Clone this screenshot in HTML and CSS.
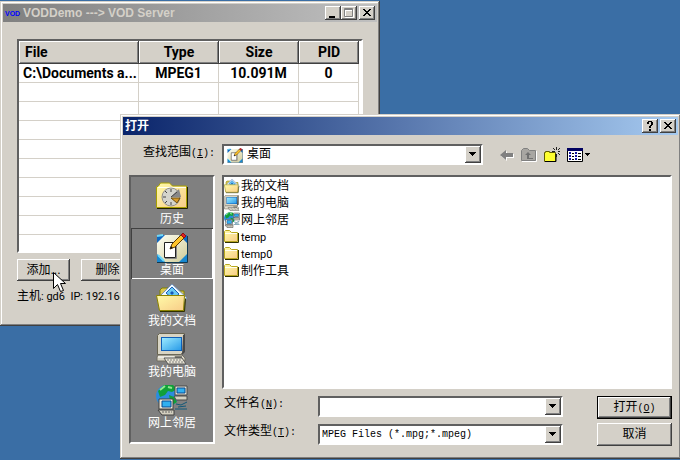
FILE: index.html
```html
<!DOCTYPE html>
<html lang="zh-CN">
  <head>
    <meta charset="UTF-8" />
    <meta name="viewport" content="width=device-width, initial-scale=1.0" />
    <title>VODDemo</title>
    <link rel="stylesheet" href="styles.css">
  </head>
  <body>
    <!-- shared icons -->
    <svg class="sprite" aria-hidden="true">
      <defs>
        <linearGradient id="screen" x1="0" y1="0" x2="1" y2="1">
          <stop offset="0" stop-color="#9ceaff" />
          <stop offset="1" stop-color="#2a9ce8" />
        </linearGradient>
        <linearGradient id="paper" x1="0" y1="0" x2="1" y2="1">
          <stop offset="0" stop-color="#fffba8" />
          <stop offset="1" stop-color="#f8cc88" />
        </linearGradient>
        <linearGradient id="desk" x1="0" y1="0" x2="1" y2="1">
          <stop offset="0" stop-color="#fffff4" />
          <stop offset="1" stop-color="#d0cc98" />
        </linearGradient>
      </defs>
      <symbol id="icon-history" viewBox="0 0 32 32">
        <path d="M.5 27.500V7l2-1 2-3h9l3 3h14v21.500z" fill="url(#paper)" stroke="#a8a000" />
        <path d="M1 28.500h30.500V7" fill="none" stroke="#202000" />
        <path d="M2 7.500h28" stroke="#fffff0" />
        <circle cx="15" cy="17" r="9" fill="#d4d4cc" stroke="#909090" />
        <path d="M15 17l8-8 2 8z" fill="#888" />
        <path d="M15 18h9l-3 5z" fill="#d89a28" stroke="#705010" />
        <path d="M15 9v3M7 17h3M9 11l2 2M9 23l2-2M15 25v-3M15 17l6-5" stroke="#444" />
      </symbol>
      <symbol id="icon-desktop" viewBox="0 0 32 32">
        <path d="M1 4h30v27H1z" fill="url(#desk)" />
        <path d="M1 4h8l-8 8zM31 12V4h-8z" fill="#1068c0" />
        <path d="M1 31v-8l8 8zM31 23v8h-8z" fill="#1888d0" />
        <path d="M1 5l6-1M2 24l6 6" stroke="#70d8f8" stroke-width="2" />
        <path d="M1 31.500h30.500V5" fill="none" stroke="#103850" />
        <path d="M8.500 11.500h11v15h-11z" fill="#fff" stroke="#222" />
        <path d="M9 27.500h11.500V14" fill="none" stroke="#888" />
        <path d="M14 18l2-5L25 4l3 3-9 9z" fill="#ffc428" stroke="#5c3800" />
        <path d="M25 4l2-2 3 3-2 2z" fill="#e02020" stroke="#901010" />
        <path d="M14 18l1-3 2 2z" fill="#111" />
      </symbol>
      <symbol id="icon-documents" viewBox="0 0 32 32">
        <path d="M4 28V8l2-2h6l2 3h14v19z" fill="#dcc850" stroke="#808000" />
        <path d="M4 14L16 2l15 14-4 5H9z" fill="#eefaff" stroke="#7890b8" />
        <path d="M10 11l6-6 7 7-6 5z" fill="#68c8f4" stroke="#2060b8" />
        <path d="M14 11l2-2 2 2-2 2z" fill="#1858b8" />
        <path d="M.5 13.500h28l-1 15H3.500z" fill="url(#paper)" stroke="#8c8400" />
        <path d="M4 29.500h24.500l1-13" fill="none" stroke="#303000" />
      </symbol>
      <symbol id="icon-computer" viewBox="0 0 32 32">
        <path d="M1.500 2.500l2-2h25v18l-4 3h-23z" fill="#d8d4c4" stroke="#686450" />
        <path d="M27 2l2-1v18l-3 3z" fill="#484848" />
        <path d="M5 4h21v14H5z" fill="#1060b8" />
        <path d="M6 5h19v12H6z" fill="url(#screen)" />
        <path d="M2 22h24l3 3v3H1v-4z" fill="#d8d4c4" stroke="#706c60" />
        <path d="M2 24h16" stroke="#fff" />
        <path d="M8 25h18l4 6H12z" fill="#e8e4d4" stroke="#585858" />
        <path d="M11 27h15M13 29h15" stroke="#808080" stroke-dasharray="2 1" />
        <path d="M19 24h7" stroke="#303030" />
      </symbol>
      <symbol id="icon-network" viewBox="0 0 32 32">
        <circle cx="11" cy="12" r="11" fill="#2c8cdc" />
        <path d="M2 7l6-6h9l4 4-5 3-4-1-3 4-5 2zM13 11l5 2 3 5-6 4z" fill="#10a038" />
        <path d="M4 6l5-4M12 3l4 1" stroke="#90e890" stroke-width="2" />
        <path d="M19 2h12v9H19z" fill="#e8e4d4" stroke="#484848" />
        <path d="M21 4h8v5h-8z" fill="#30b0f0" stroke="#084890" />
        <path d="M18 12h13v4H20z" fill="#d4d0c0" stroke="#484848" />
        <path d="M3 15h14v10H3z" fill="#f0ecdc" stroke="#404040" />
        <path d="M6 17h9v6H6z" fill="#30b0f0" stroke="#084890" />
        <path d="M2 26h16v5H6z" fill="#d4d0c0" stroke="#404040" />
        <path d="M6 28h10" stroke="#666" stroke-dasharray="2 1" />
        <path d="M19 25h12M20 20l5 1 6-3M22 23l8-1" fill="none" stroke="#125878" />
      </symbol>
      <symbol id="icon-folder" viewBox="0 0 16 16">
        <path d="M.5 12.500v-10l1-1h4l2 2h6v9z" fill="url(#paper)" stroke="#b8a820" />
        <path d="M1 13.500h13.500V4" fill="none" stroke="#303000" />
        <path d="M1 4.500h12" stroke="#fffff0" />
      </symbol>
      <symbol id="icon-arrow" viewBox="0 0 12 12">
        <path d="M2 4h7v1H8v1H7v1H6v1H5V7H4V6H3V5H2z" />
      </symbol>
    </svg>

    <main class="desktop">
      <section class="window server">
        <header class="titlebar inactive">
          <span class="logo">VOD</span>
          <h1 class="title">VODDemo ---&gt; VOD Server</h1>
          <button class="caption-btn" aria-label="Minimize">
            <svg viewBox="0 0 12 10"><path d="M2 8h6v2H2z" /></svg>
          </button>
          <button class="caption-btn" aria-label="Maximize" disabled>
            <svg viewBox="0 0 12 10"><path d="M2.500 1.500h8v8h-8zM2 2.500h9" fill="none" stroke="#fff" /><path d="M1.500 .5h8v8h-8zM1 1.500h9" fill="none" stroke="#808080" /></svg>
          </button>
          <button class="caption-btn close" aria-label="Close">
            <svg viewBox="0 0 12 10"><path d="M2 1h2v1h1v1h2V2h1V1h2v1H9v1H8v1H7v1h1v1h1v1h1v1H8V7H7V6H5v1H4v1H2V7h1V6h1V5h1V4H4V3H3V2H2z" /></svg>
          </button>
        </header>
        <div class="server-body">
          <div class="grid-view sunken">
            <table class="files">
              <thead>
                <tr>
                  <th class="col-file">File</th>
                  <th class="col-type">Type</th>
                  <th class="col-type">Size</th>
                  <th class="col-pid">PID</th>
                </tr>
              </thead>
              <tbody>
                <tr><td>C:\Documents a...</td><td>MPEG1</td><td>10.091M</td><td>0</td></tr>
                <tr><td></td><td></td><td></td><td></td></tr>
                <tr><td></td><td></td><td></td><td></td></tr>
                <tr><td></td><td></td><td></td><td></td></tr>
                <tr><td></td><td></td><td></td><td></td></tr>
                <tr><td></td><td></td><td></td><td></td></tr>
                <tr><td></td><td></td><td></td><td></td></tr>
                <tr><td></td><td></td><td></td><td></td></tr>
                <tr><td></td><td></td><td></td><td></td></tr>
              </tbody>
            </table>
          </div>
          <div class="actions">
            <button class="btn">添加...</button>
            <button class="btn">删除</button>
          </div>
          <p class="status">主机<span class="latin">: gd6  IP: 192.168</span></p>
        </div>
      </section>

      <section class="window dialog" role="dialog" aria-labelledby="dialog-title">
        <header class="titlebar">
          <h2 class="title" id="dialog-title">打开</h2>
          <button class="caption-btn" aria-label="Help">
            <svg viewBox="0 0 12 10"><path d="M3 1h1V0h4v1h1v3H8v1H7v2H5V5h1V4h1V1H5v2H3zM5 8h2v2H5z" /></svg>
          </button>
          <button class="caption-btn close" aria-label="Close">
            <svg viewBox="0 0 12 10"><path d="M2 1h2v1h1v1h2V2h1V1h2v1H9v1H8v1H7v1h1v1h1v1h1v1H8V7H7V6H5v1H4v1H2V7h1V6h1V5h1V4H4V3H3V2H2z" /></svg>
          </button>
        </header>
        <div class="dialog-body">
          <div class="look-in">
            <label class="look-label" for="folder">查找范围<span class="mono">(<u>I</u>):</span></label>
            <div class="combo folder-combo sunken">
              <svg class="combo-icon"><use href="#icon-desktop" /></svg>
              <select id="folder"><option>桌面</option></select>
              <span class="drop"><svg><use href="#icon-arrow" /></svg></span>
            </div>
            <div class="tools">
              <button class="tool" aria-label="Back">
                <svg viewBox="0 0 16 16"><path d="M3 9l6-5v3h7v4H9v3z" fill="#fff" /><path d="M2 8l6-5v3h7v4H8v3z" fill="#808080" /></svg>
              </button>
              <button class="tool" aria-label="Up one level">
                <svg viewBox="0 0 16 16"><path d="M1 14.500h14.500V4" fill="none" stroke="#fff" /><path d="M.5 13.500v-10l2-2h4l2 2h6v10z" fill="#a8a6a2" stroke="#808080" /><path d="M4 8l3-3 3 3H8v3h4v1H6V8z" fill="#707070" /></svg>
              </button>
              <button class="tool" aria-label="New folder">
                <svg viewBox="0 0 16 16"><path d="M.5 14.500v-9h1v-1h4v1h6v9z" fill="#ffff30" stroke="#605c00" /><path d="M1 14.500h11V7" fill="none" stroke="#000" /><path d="M12.500 0v3M12.500 7v3M8 4.500h3M14 4.500h2M9 1l2 2M16 1l-2 2M14 6l2 2" stroke="#222" /></svg>
              </button>
              <button class="tool wide" aria-label="View menu">
                <svg viewBox="0 0 24 16"><path d="M.5 1.500h15v13H.5z" fill="#fff" stroke="#000" /><path d="M0 1h16v3H0z" fill="#000060" /><path d="M2 5h2v2H2zM8 5h2v2H8zM2 8h2v2H2zM8 8h2v2H8zM2 11h2v2H2zM8 11h2v2H8z" fill="#1818a0" /><path d="M5 6.500h2M11 6.500h3M5 9.500h2M11 9.500h3M5 12.500h2M11 12.500h3" stroke="#000" /><path d="M18 6h5v1h-1v1h-1v1h-1V8h-1V7h-1z" /></svg>
              </button>
            </div>
          </div>

          <div class="browser">
            <nav class="places sunken">
              <button class="place"><svg><use href="#icon-history" /></svg>历史</button>
              <button class="place selected"><svg><use href="#icon-desktop" /></svg>桌面</button>
              <button class="place"><svg><use href="#icon-documents" /></svg>我的文档</button>
              <button class="place"><svg><use href="#icon-computer" /></svg>我的电脑</button>
              <button class="place"><svg><use href="#icon-network" /></svg>网上邻居</button>
            </nav>
            <div class="content">
              <ul class="file-list sunken">
                <li><svg><use href="#icon-documents" /></svg>我的文档</li>
                <li><svg><use href="#icon-computer" /></svg>我的电脑</li>
                <li><svg><use href="#icon-network" /></svg>网上邻居</li>
                <li><svg><use href="#icon-folder" /></svg><span class="latin">temp</span></li>
                <li><svg><use href="#icon-folder" /></svg><span class="latin">temp0</span></li>
                <li><svg><use href="#icon-folder" /></svg>制作工具</li>
              </ul>
              <form class="open-form" onsubmit="return false">
                <div class="fields">
                  <label for="filename">文件名<span class="mono">(<u>N</u>):</span></label>
                  <div class="combo sunken">
                    <input id="filename" type="text" autocomplete="off">
                    <span class="drop"><svg><use href="#icon-arrow" /></svg></span>
                  </div>
                  <label for="filetype">文件类型<span class="mono">(<u>T</u>):</span></label>
                  <div class="combo sunken">
                    <select id="filetype" class="mono"><option>MPEG Files (*.mpg;*.mpeg)</option></select>
                    <span class="drop"><svg><use href="#icon-arrow" /></svg></span>
                  </div>
                </div>
                <div class="form-buttons">
                  <button class="btn default">打开<span class="mono">(<u>O</u>)</span></button>
                  <button class="btn" type="button">取消</button>
                </div>
              </form>
            </div>
          </div>
        </div>
      </section>

      <svg class="cursor" viewBox="0 0 13 21"><path d="M.5 .5v16l4-4 3 7 3-1-3-7h5z" fill="#fff" stroke="#000" /></svg>
    </main>
  </body>
</html>
```
FILE: styles.css
```css
* {
  box-sizing: border-box;
}

body {
  margin: 0;
  background-color: #3a6ea5;
  color: #000;
  font-family: "Liberation Sans", "Noto Sans CJK SC", sans-serif;
  font-size: 12px;
  line-height: 17px;
}

button,
input,
select {
  font: inherit;
  color: inherit;
  border-radius: 0;
}

svg {
  display: block;
}

.sprite {
  position: absolute;
  width: 0;
  height: 0;
}

.desktop {
  position: relative;
  min-height: 100vh;
  overflow: hidden;
}

.mono {
  font-family: "Liberation Mono", "Noto Sans CJK SC", monospace;
  font-size: 10px;
}

.latin {
  font-family: Roboto, "Liberation Sans", sans-serif;
  font-size: 11px;
}

/* Windows */
.window {
  position: absolute;
  padding: 3px;
  background-color: #d4d0c8;
  box-shadow: inset -1px -1px #404040, inset 1px 1px #d4d0c8,
    inset -2px -2px #808080, inset 2px 2px #fff;
}

.server {
  top: 1px;
  left: 0;
  width: 380px;
}

.dialog {
  top: 114px;
  left: 120px;
  right: -1px;
}

.titlebar {
  display: flex;
  align-items: center;
  height: 18px;
  padding: 0 2px;
  background: linear-gradient(to right, #0a246a, #a6caf0);
  color: #fff;
}

.titlebar.inactive {
  background: linear-gradient(to right, #808080, #c0c0c0);
  color: #d4d0c8;
}

.title {
  flex: 1;
  margin: 0;
  font-size: 12px;
  font-weight: bold;
  line-height: 18px;
}

.logo {
  width: 18px;
  color: #0000ff;
  font-size: 7px;
  font-weight: bold;
}

.caption-btn {
  width: 16px;
  height: 14px;
  padding: 2px;
  border: none;
  background-color: #d4d0c8;
  box-shadow: inset -1px -1px #404040, inset 1px 1px #fff,
    inset -2px -2px #808080;
}

.caption-btn.close {
  margin-left: 2px;
}

.caption-btn svg {
  width: 12px;
  height: 10px;
}

/* Raised and sunken edges */
.sunken {
  border: 2px solid;
  border-color: #606060 #fff #fff #606060;
}

.btn {
  padding: 0;
  border: none;
  background-color: #d4d0c8;
  box-shadow: inset -1px -1px #404040, inset 1px 1px #fff,
    inset -2px -2px #808080;
}

.btn.default {
  border: 1px solid #000;
}

/* Server window */
.server-body {
  padding: 17px 14px;
}

.grid-view {
  padding-bottom: 16px;
  background-color: #fff;
}

.files {
  table-layout: fixed;
  width: 340px;
  border-collapse: separate;
  border-spacing: 0;
  font-family: Roboto, "Liberation Sans", sans-serif;
  font-size: 14px;
  font-weight: bold;
}

.files th {
  height: 23px;
  padding: 0;
  background-color: #d4d0c8;
  box-shadow: inset -1px -1px #404040, inset 1px 1px #fff,
    inset -2px -2px #808080;
}

.files td {
  height: 19px;
  padding: 0;
  border: 1px solid #d4d0c8;
  border-width: 0 1px 1px 0;
  line-height: 18px;
  text-align: center;
  white-space: nowrap;
}

.files th:first-child {
  padding-left: 6px;
  text-align: left;
}

.files td:first-child {
  padding-left: 4px;
  text-align: left;
}

.col-file {
  width: 120px;
}

.col-type {
  width: 80px;
}

.col-pid {
  width: 60px;
}

.actions {
  display: flex;
  gap: 11px;
  margin-top: 6px;
}

.actions .btn {
  width: 53px;
  height: 22px;
}

.status {
  margin: 6px 0 0;
  line-height: 18px;
  white-space: pre;
}

/* Open dialog */
.dialog-body {
  padding: 9px 6px 10px;
}

.look-in {
  display: flex;
  height: 21px;
  margin-bottom: 10px;
}

.look-label {
  width: 93px;
  padding-left: 14px;
}

.combo {
  position: relative;
  height: 21px;
  background-color: #fff;
}

.combo select,
.combo input {
  display: block;
  width: 100%;
  height: 17px;
  padding: 0 18px 0 2px;
  border: none;
  outline: none;
  background: none;
  appearance: none;
}

.folder-combo {
  width: 261px;
}

.folder-combo select {
  padding-left: 23px;
}

.combo-icon {
  position: absolute;
  top: 1px;
  left: 3px;
  width: 16px;
  height: 16px;
}

.drop {
  position: absolute;
  top: 0;
  right: 0;
  width: 16px;
  height: 17px;
  padding: 2px;
  background-color: #d4d0c8;
  box-shadow: inset -1px -1px #404040, inset 1px 1px #fff,
    inset -2px -2px #808080;
  pointer-events: none;
}

.drop svg {
  width: 12px;
  height: 12px;
}

.tools {
  display: flex;
  align-items: center;
  gap: 7px;
  margin-left: 15px;
}

.tool {
  width: 16px;
  height: 16px;
  padding: 0;
  border: none;
  background: none;
}

.tool.wide {
  width: 24px;
}

.tool svg {
  width: 100%;
  height: 16px;
}

.browser {
  display: flex;
  align-items: flex-start;
  gap: 7px;
}

.places {
  width: 86px;
  padding-bottom: 10px;
  background-color: #808080;
}

.place {
  display: flex;
  flex-direction: column;
  align-items: center;
  width: 100%;
  height: 51px;
  padding: 3px 0 0;
  border: none;
  background: none;
  color: #fff;
  line-height: 14px;
}

.place.selected {
  box-shadow: inset 1px 1px #404040, inset -1px -1px #fff;
}

.place svg {
  width: 32px;
  height: 32px;
}

.content {
  flex: 1;
}

.file-list {
  height: 214px;
  margin: 0 0 7px;
  padding: 1px 0;
  background-color: #fff;
  list-style: none;
}

.file-list li {
  display: flex;
  gap: 1px;
  height: 17px;
}

.file-list svg {
  width: 16px;
  height: 16px;
}

.open-form {
  display: flex;
  justify-content: space-between;
}

.fields {
  display: grid;
  grid-template-columns: 96px 245px;
  row-gap: 5px;
}

.fields label {
  padding-left: 2px;
  line-height: 15px;
}

.form-buttons {
  display: grid;
  align-content: start;
  gap: 4px;
}

.form-buttons .btn {
  width: 75px;
  height: 23px;
}

.cursor {
  position: absolute;
  top: 272px;
  left: 53px;
  width: 13px;
  height: 21px;
}
```
